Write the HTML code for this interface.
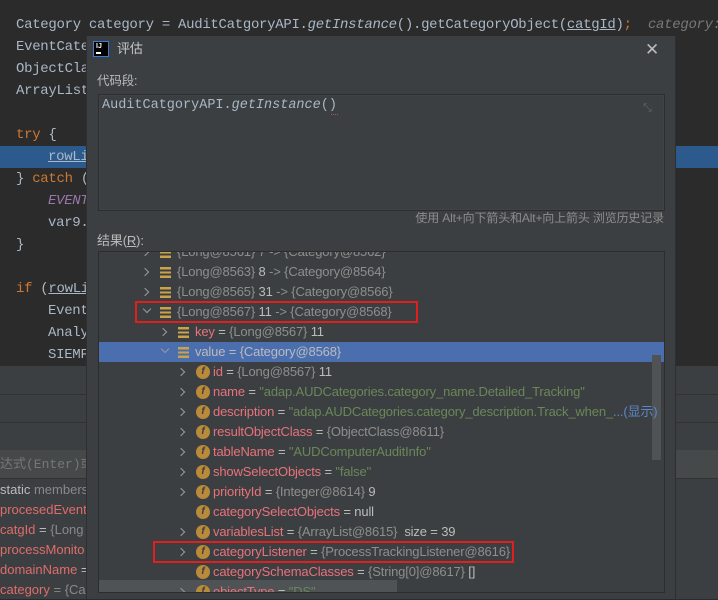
<!DOCTYPE html>
<html><head><meta charset="utf-8"><style>
*{margin:0;padding:0;box-sizing:border-box}
body{width:718px;height:599px;overflow:hidden;background:#2b2b2b;position:relative;font-family:"Liberation Sans","Noto Sans CJK SC",sans-serif}
.code{position:absolute;left:0;font-family:"Liberation Mono","Noto Sans CJK SC",monospace;font-size:14px;color:#a9b7c6;white-space:pre;line-height:22px;height:22px;letter-spacing:-0.3px}
.kw{color:#cc7832}.it{font-style:italic}.gr{color:#787878;font-style:italic}.pu{color:#9876aa;font-style:italic}
.lft{position:absolute;left:0;font-size:13px;color:#e06c6c;white-space:pre;line-height:20px}
.dlg{position:absolute;left:86px;top:36px;width:590px;height:563px;background:#3c3f41;border-left:1px solid #2f2f2f;border-right:1px solid #2f2f2f}
.t{position:absolute;white-space:pre;font-size:13px;line-height:20px;color:#bbbbbb;letter-spacing:-0.15px}
.chev{position:absolute;width:6px;height:6px;border-right:1.5px solid #9a9a9a;border-bottom:1.5px solid #9a9a9a}
.bars{position:absolute;width:11px;height:11px;background:repeating-linear-gradient(#c9a24a 0 2.4px,transparent 2.4px 4.3px)}
.f{position:absolute;width:14px;height:14px;border-radius:50%;background:#b88a3a;color:#3c3f41;font-size:10px;font-weight:bold;text-align:center;line-height:14px;font-style:italic}
.n{color:#e8727c}.g{color:#8e8e8e}.s{color:#6a8759}.w{color:#bbbbbb}
</style></head><body>
<div class="code" style="top:14px;left:16px">Category category = AuditCatgoryAPI.<span class="it">getInstance</span>().getCategoryObject(<u>catgId</u>)<span class="kw">;</span>  <span class="gr">category:</span></div>
<div class="code" style="top:36px;left:16px">EventCate                                                         <span class="gr">ntCate</span></div>
<div class="code" style="top:58px;left:16px">ObjectCla                                                          <span class="gr">8    c</span></div>
<div class="code" style="top:80px;left:16px">ArrayList</div>
<div class="code" style="top:124px;left:16px"><span class="kw">try</span> {</div>
<div style="position:absolute;left:0;top:146px;width:718px;height:22px;background:#2d5a8c"></div>
<div class="code" style="top:146px;left:48px"><u>rowLi</u>                                                         <u>proc</u></div>
<div class="code" style="top:168px;left:16px">} <span class="kw">catch</span> (</div>
<div class="code" style="top:190px;left:48px"><span class="pu">EVENT</span>                                                        entTab</div>
<div class="code" style="top:212px;left:48px">var9.</div>
<div class="code" style="top:234px;left:16px">}</div>
<div class="code" style="top:278px;left:16px"><span class="kw">if</span> (<u>rowLi</u></div>
<div class="code" style="top:300px;left:48px">Event                                                     e)<span class="kw">;</span></div>
<div class="code" style="top:322px;left:48px">Analy</div>
<div class="code" style="top:344px;left:48px">SIEMF</div>
<div style="position:absolute;left:0;top:366px;width:718px;height:233px;background:#3c3f41"></div>
<div style="position:absolute;left:0;top:394px;width:718px;height:1px;background:#323232"></div>
<div style="position:absolute;left:0;top:422px;width:718px;height:1px;background:#323232"></div>
<div style="position:absolute;left:0;top:450px;width:718px;height:29px;background:#45494a;border-bottom:1px solid #323232"></div>
<div class="lft" style="top:455px;color:#777;font-family:'Liberation Mono','Noto Sans CJK SC',monospace;font-size:13px">达式(Enter)或</div>
<div class="lft" style="top:480px;color:#bbb">static <span style="color:#888">members</span></div>
<div class="lft" style="top:500px">procesedEvent</div>
<div class="lft" style="top:520px">catgId <span style="color:#bbb">=</span> <span style="color:#888">{Long</span></div>
<div class="lft" style="top:540px">processMonito</div>
<div class="lft" style="top:560px">domainName <span style="color:#bbb">=</span></div>
<div class="lft" style="top:580px">category <span style="color:#888">= {Ca</span></div>

<div class="dlg">
 <div style="position:absolute;left:6px;top:5px;width:16px;height:16px;background:#000;border:1.5px solid #3a7bd5;color:#fff;font-size:7px;font-weight:bold;line-height:9px;padding-left:2px">IJ<div style="width:5px;height:1.5px;background:#fff;margin-top:1px"></div></div>
 <div class="t" style="left:30px;top:3px;font-size:13px;color:#c8c8c8">评估</div>
 <div style="position:absolute;left:558px;top:6px;font-size:17px;color:#bbb;line-height:16px">✕</div>
 <div class="t" style="left:10px;top:35px;font-size:12.5px">代码段:</div>
 <div style="position:absolute;left:11px;top:58px;width:567px;height:117px;background:#3c3f41;border:1px solid #2d2d2d;box-shadow:inset 0 0 0 1px #414446"></div>
 <div class="t" style="left:15px;top:60px;font-family:'Liberation Mono',monospace;font-size:13.5px;color:#a9b7c6;letter-spacing:0">AuditCatgoryAPI.<i>getInstance</i>()</div>
 <div style="position:absolute;left:244px;top:77px;width:7px;height:2px;border-bottom:1px dotted #c34b4b"></div>
 <div class="t" style="left:556px;top:62px;color:#666;font-size:11px">⤡</div>
 <div class="t" style="right:11px;top:172px;font-size:12px;color:#8c8c8c">使用 Alt+向下箭头和Alt+向上箭头 浏览历史记录</div>
 <div class="t" style="left:10px;top:195px">结果(<u>R</u>):</div>
 <div style="position:absolute;left:11px;top:215px;width:567px;height:342px;border:1px solid #2d2d2d;overflow:hidden">
  <div style="position:absolute;left:0;top:90px;width:566px;height:20px;background:#4b6eaf"></div>
  <div style="position:absolute;left:553px;top:103px;width:9px;height:105px;background:#505355"></div>
  <div style="position:absolute;left:0;top:328px;width:298px;height:14px;background:#505355"></div>
  <div class="t" style="left:78px;top:-10px"><span class="g">{Long@8561} 7 -&gt; {Category@8562}</span></div>
  <div class="chev" style="left:43px;top:-3px;transform:rotate(-45deg)"></div><div class="bars" style="left:61px;top:-5px"></div>

  <div class="chev" style="left:43px;top:17px;transform:rotate(-45deg)"></div><div class="bars" style="left:61px;top:15px"></div>
  <div class="t" style="left:78px;top:10px"><span class="g">{Long@8563}</span> 8 <span class="g">-&gt; {Category@8564}</span></div>
  <div class="chev" style="left:43px;top:37px;transform:rotate(-45deg)"></div><div class="bars" style="left:61px;top:35px"></div>
  <div class="t" style="left:78px;top:30px"><span class="g">{Long@8565}</span> 31 <span class="g">-&gt; {Category@8566}</span></div>
  <div class="chev" style="left:45px;top:54px;transform:rotate(45deg)"></div><div class="bars" style="left:61px;top:55px"></div>
  <div class="t" style="left:78px;top:50px"><span class="g">{Long@8567}</span> 11 <span class="g">-&gt; {Category@8568}</span></div>
  <div style="position:absolute;left:36px;top:49px;width:283px;height:22px;border:2px solid #e0201c"></div>

  <div class="chev" style="left:61px;top:77px;transform:rotate(-45deg)"></div><div class="bars" style="left:79px;top:75px"></div>
  <div class="t" style="left:96px;top:70px"><span class="n">key</span> = <span class="g">{Long@8567}</span> 11</div>
  <div class="chev" style="left:63px;top:94px;transform:rotate(45deg)"></div><div class="bars" style="left:79px;top:95px"></div>
  <div class="t" style="left:96px;top:90px">value = <span>{Category@8568}</span></div>

  <div class="chev" style="left:79px;top:117px;transform:rotate(-45deg)"></div><div class="f" style="left:97px;top:113px">f</div>
  <div class="t" style="left:114px;top:110px"><span class="n">id</span> = <span class="g">{Long@8567}</span> 11</div>
  <div class="chev" style="left:79px;top:137px;transform:rotate(-45deg)"></div><div class="f" style="left:97px;top:133px">f</div>
  <div class="t" style="left:114px;top:130px"><span class="n">name</span> = <span class="s">"adap.AUDCategories.category_name.Detailed_Tracking"</span></div>
  <div class="chev" style="left:79px;top:157px;transform:rotate(-45deg)"></div><div class="f" style="left:97px;top:153px">f</div>
  <div class="t" style="left:114px;top:150px"><span class="n">description</span> = <span class="s">"adap.AUDCategories.category_description.Track_when_</span><span style="color:#5c86c6">...(显示)</span></div>
  <div class="chev" style="left:79px;top:177px;transform:rotate(-45deg)"></div><div class="f" style="left:97px;top:173px">f</div>
  <div class="t" style="left:114px;top:170px"><span class="n">resultObjectClass</span> = <span class="g">{ObjectClass@8611}</span></div>
  <div class="chev" style="left:79px;top:197px;transform:rotate(-45deg)"></div><div class="f" style="left:97px;top:193px">f</div>
  <div class="t" style="left:114px;top:190px"><span class="n">tableName</span> = <span class="s">"AUDComputerAuditInfo"</span></div>
  <div class="chev" style="left:79px;top:217px;transform:rotate(-45deg)"></div><div class="f" style="left:97px;top:213px">f</div>
  <div class="t" style="left:114px;top:210px"><span class="n">showSelectObjects</span> = <span class="s">"false"</span></div>
  <div class="chev" style="left:79px;top:237px;transform:rotate(-45deg)"></div><div class="f" style="left:97px;top:233px">f</div>
  <div class="t" style="left:114px;top:230px"><span class="n">priorityId</span> = <span class="g">{Integer@8614}</span> 9</div>
  <div class="f" style="left:97px;top:253px">f</div>
  <div class="t" style="left:114px;top:250px"><span class="n">categorySelectObjects</span> = null</div>
  <div class="chev" style="left:79px;top:277px;transform:rotate(-45deg)"></div><div class="f" style="left:97px;top:273px">f</div>
  <div class="t" style="left:114px;top:270px"><span class="n">variablesList</span> = <span class="g">{ArrayList@8615}</span>  size = 39</div>
  <div class="chev" style="left:79px;top:297px;transform:rotate(-45deg)"></div><div class="f" style="left:97px;top:293px">f</div>
  <div class="t" style="left:114px;top:290px"><span class="n">categoryListener</span> = <span class="g">{ProcessTrackingListener@8616}</span></div>
  <div style="position:absolute;left:54px;top:289px;width:361px;height:22px;border:2px solid #e0201c"></div>
  <div class="f" style="left:97px;top:313px">f</div>
  <div class="t" style="left:114px;top:310px"><span class="n">categorySchemaClasses</span> = <span class="g">{String[0]@8617}</span> []</div>
  <div class="chev" style="left:79px;top:337px;transform:rotate(-45deg)"></div><div class="f" style="left:97px;top:333px">f</div>
  <div class="t" style="left:114px;top:330px"><span class="n">objectType</span> = <span class="s">"DS"</span></div>
 </div>
</div>
</body></html>
